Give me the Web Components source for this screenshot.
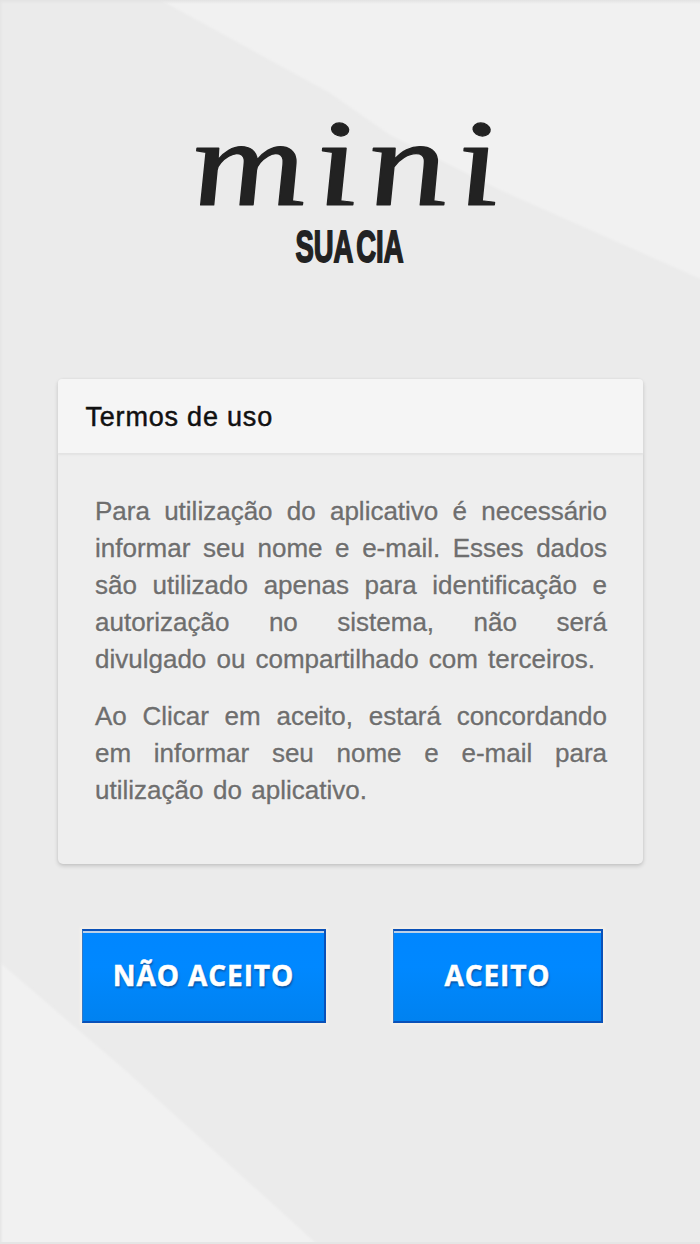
<!DOCTYPE html>
<html lang="pt-BR">
<head>
<meta charset="utf-8">
<title>Termos de uso</title>
<style>
html,body{margin:0;height:100%}
body{font-family:"Liberation Sans",Arial,sans-serif;overflow:hidden}
</style>
</head>
<body>
<mini-screen>
  <mini-brand></mini-brand>
  <terms-card>
    <span slot="title">Termos de uso</span>
    <justified-text lines="Para utilização do aplicativo é necessário|informar seu nome e e-mail. Esses dados|são utilizado apenas para identificação e|autorização no sistema, não será|divulgado ou compartilhado com terceiros." last="500"></justified-text>
    <justified-text lines="Ao Clicar em aceito, estará concordando|em informar seu nome e e-mail para|utilização do aplicativo." last="272"></justified-text>
  </terms-card>
  <button-row>
    <action-button style="--w:244px">NÃO ACEITO</action-button>
    <action-button style="--w:210px">ACEITO</action-button>
  </button-row>
</mini-screen>
<script>
const define = (name, html, setup) => customElements.define(name, class extends HTMLElement {
  constructor() {
    super();
    this.attachShadow({ mode: 'open' }).innerHTML = html;
  }
  connectedCallback() { if (setup) setup(this, this.shadowRoot); }
});

define('mini-screen', `<style>
:host{display:grid;width:700px;height:1244px;background:#ebebeb;overflow:hidden}
.bg,.content{grid-area:1/1;min-width:0}
.bg{display:block}
.content{display:flex;flex-direction:column;z-index:1}
</style>
<svg class="bg" width="700" height="1244" viewBox="0 0 700 1244">
<defs>
<linearGradient id="side"><stop offset="0" stop-color="#e5e5e5"/><stop offset="1" stop-color="#e5e5e5" stop-opacity="0"/></linearGradient>
<linearGradient id="top" x2="0" y2="1"><stop offset="0" stop-color="#e3e3e3"/><stop offset="1" stop-color="#e3e3e3" stop-opacity="0"/></linearGradient>
<filter id="soft"><feGaussianBlur stdDeviation="1"/></filter>
</defs>
<g fill="#f1f1f1" filter="url(#soft)">
<path d="M155 -3 L330 93 L390 135 L500 190 L703 280 V-3Z"/>
<path d="M-3 960 L125 1070 L320 1247 H-3Z"/>
</g>
<rect width="3" height="1244" fill="url(#side)"/><rect width="700" height="4" fill="url(#top)"/>
<rect y="1242" width="700" height="2" fill="#e5e5e5"/>
</svg>
<div class="content"><slot></slot></div>`);

define('mini-brand', `<style>
:host{display:block;height:379px;flex:none}
svg{display:block}
</style>
<svg width="700" height="379" viewBox="0 0 700 379" fill="#222">
<text transform="translate(195 205) skewX(7) scale(1.28 1)" font-family="Liberation Serif" font-style="italic" font-size="124" letter-spacing="7" stroke="#222" stroke-width="1.2" stroke-linejoin="round">mini</text>
<text x="295.5" y="261.5" font-family="Liberation Sans" font-weight="700" font-size="45" textLength="108" lengthAdjust="spacingAndGlyphs" word-spacing="-6" stroke="#222" stroke-width="1.8">SUA CIA</text>
</svg>`);

define('terms-card', `<style>
:host{display:block;flex:none;box-sizing:border-box;width:585px;height:485px;margin-left:58px;border-radius:5px;background:#eee;box-shadow:0 2px 4px rgba(0,0,0,.17),0 0 3px rgba(0,0,0,.05)}
header{box-sizing:border-box;height:74px;padding:23px 27.5px 0;background:#f5f5f5;border-radius:4px 4px 0 0;box-shadow:0 2px 2px #e2e2e2;font-size:27px;line-height:31px;letter-spacing:.8px;color:#111;-webkit-text-stroke:.5px #111;text-shadow:0 0 3px #fff}
.body{display:flex;flex-direction:column;gap:19.5px;padding:40px 36px 0 37px}
</style>
<header><slot name="title"></slot></header><div class="body"><slot></slot></div>`);

define('justified-text', `<style>
:host{display:block;color:#6e6e6e;font-size:26px;line-height:37px;text-shadow:0 0 2px #fff}
div{white-space:nowrap;text-align:justify;text-align-last:justify;-webkit-text-stroke:.35px #6e6e6e}
</style>`, (el, root) => {
  const lines = el.getAttribute('lines').split('|');
  lines.forEach((line, i) => {
    const row = document.createElement('div');
    row.textContent = line;
    if (i === lines.length - 1) row.style.width = el.getAttribute('last') + 'px';
    root.append(row);
  });
});

define('button-row', `<style>
:host{display:flex;flex:none;gap:67px;margin:65px 0 0 82px}
</style><slot></slot>`);

define('action-button', `<style>
:host{display:block}
button{display:block;box-sizing:border-box;width:var(--w);height:94px;margin:0;padding:0 0 3px;border:2px solid #0a51b8;border-left:1px solid #3478c4;background:linear-gradient(#bcd0e8 0 2px,#0086ff 2px,#0088ff 40%,#0082f0);box-shadow:0 0 2px 2px #f4f1eb;color:#fff;font:700 28px "Open Sans","Noto Sans",sans-serif;letter-spacing:.9px;-webkit-text-stroke:.5px #fff;text-shadow:1px 2px 2px #0755a6}
</style><button><slot></slot></button>`);
</script>
</body>
</html>
